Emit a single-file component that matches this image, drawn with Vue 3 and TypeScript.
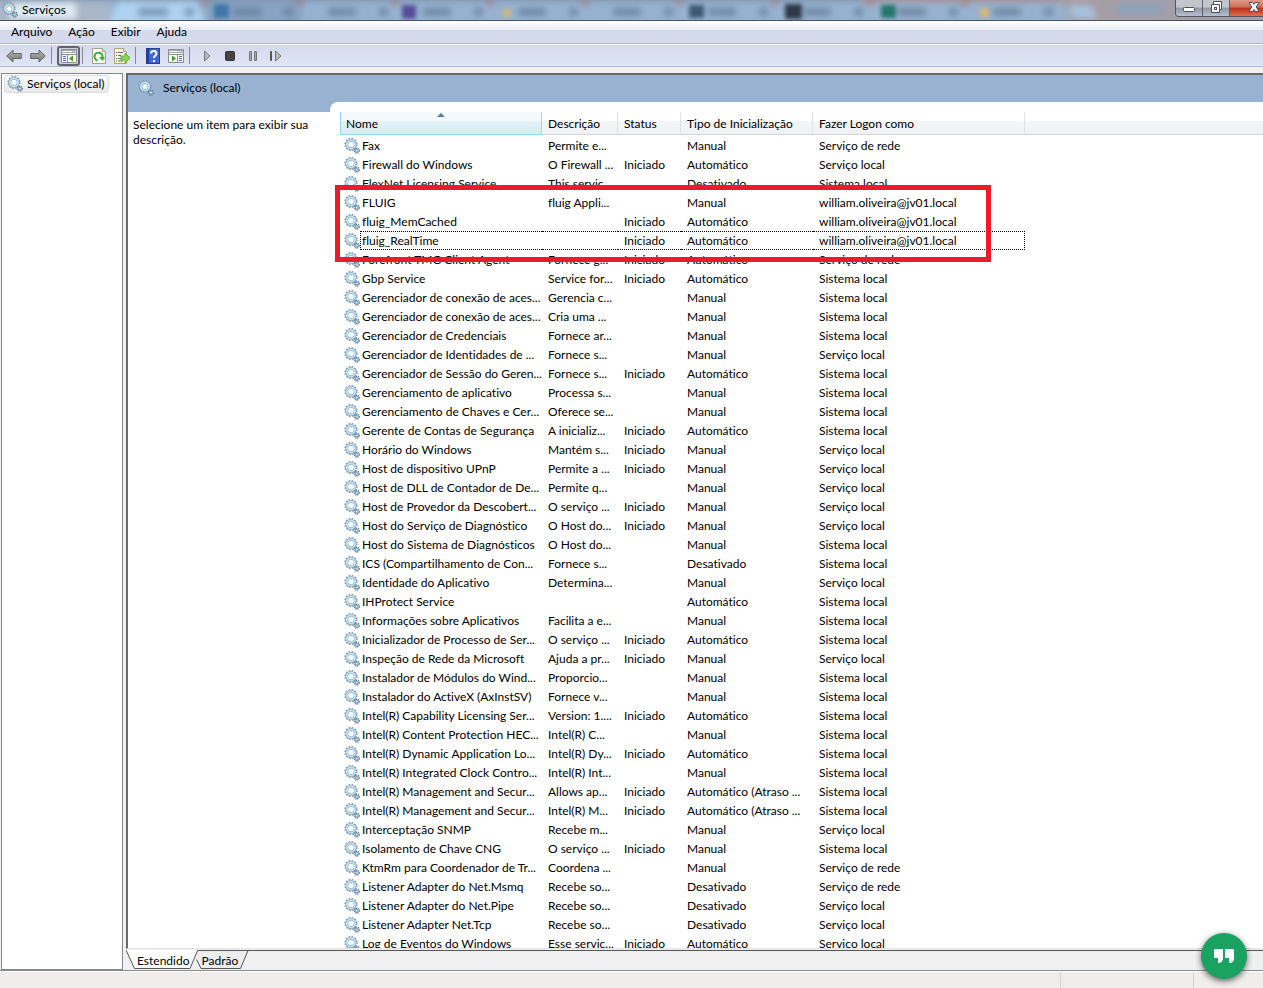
<script setup lang="ts">
interface Service {
  name: string
  description: string
  status: string
  startup: string
  logon: string
  focused?: boolean
}

const startupTypes: Record<string, string> = {
  M: 'Manual',
  A: 'Automático',
  D: 'Desativado',
  T: 'Automático (Atraso ...',
}

const logonAccounts: Record<string, string> = {
  S: 'Sistema local',
  L: 'Serviço local',
  R: 'Serviço de rede',
  W: 'william.oliveira@jv01.local',
}

// name | description | running | startup type | logon account
const source = `Fax|Permite e...||M|R
Firewall do Windows|O Firewall ...|1|A|L
FlexNet Licensing Service|This servic...||D|S
FLUIG|fluig Appli...||M|W
fluig_MemCached||1|A|W
fluig_RealTime||1|A|W
Forefront TMG Client Agent|Fornece g...|1|A|R
Gbp Service|Service for...|1|A|S
Gerenciador de conexão de aces...|Gerencia c...||M|S
Gerenciador de conexão de aces...|Cria uma ...||M|S
Gerenciador de Credenciais|Fornece ar...||M|S
Gerenciador de Identidades de ...|Fornece s...||M|L
Gerenciador de Sessão do Geren...|Fornece s...|1|A|S
Gerenciamento de aplicativo|Processa s...||M|S
Gerenciamento de Chaves e Cer...|Oferece se...||M|S
Gerente de Contas de Segurança|A inicializ...|1|A|S
Horário do Windows|Mantém s...|1|M|L
Host de dispositivo UPnP|Permite a ...|1|M|L
Host de DLL de Contador de De...|Permite q...||M|L
Host de Provedor da Descobert...|O serviço ...|1|M|L
Host do Serviço de Diagnóstico|O Host do...|1|M|L
Host do Sistema de Diagnósticos|O Host do...||M|S
ICS (Compartilhamento de Con...|Fornece s...||D|S
Identidade do Aplicativo|Determina...||M|L
IHProtect Service|||A|S
Informações sobre Aplicativos|Facilita a e...||M|S
Inicializador de Processo de Ser...|O serviço ...|1|A|S
Inspeção de Rede da Microsoft|Ajuda a pr...|1|M|L
Instalador de Módulos do Wind...|Proporcio...||M|S
Instalador do ActiveX (AxInstSV)|Fornece v...||M|S
Intel(R) Capability Licensing Ser...|Version: 1....|1|A|S
Intel(R) Content Protection HEC...|Intel(R) C...||M|S
Intel(R) Dynamic Application Lo...|Intel(R) Dy...|1|A|S
Intel(R) Integrated Clock Contro...|Intel(R) Int...||M|S
Intel(R) Management and Secur...|Allows ap...|1|T|S
Intel(R) Management and Secur...|Intel(R) M...|1|T|S
Interceptação SNMP|Recebe m...||M|L
Isolamento de Chave CNG|O serviço ...|1|M|S
KtmRm para Coordenador de Tr...|Coordena ...||M|R
Listener Adapter do Net.Msmq|Recebe so...||D|R
Listener Adapter do Net.Pipe|Recebe so...||D|L
Listener Adapter Net.Tcp|Recebe so...||D|L
Log de Eventos do Windows|Esse serviç...|1|A|L`

const services: Service[] = source.split('\n').map((line) => {
  const [name, description, running, startup, logon] = line.split('|')
  return {
    name,
    description,
    status: running ? 'Iniciado' : '',
    startup: startupTypes[startup],
    logon: logonAccounts[logon],
    focused: name === 'fluig_RealTime',
  }
})

const menus = ['Arquivo', 'Ação', 'Exibir', 'Ajuda']
const tabEdges = [205, 300, 395, 490, 585, 680, 775, 870, 965]
</script>

<template>
  <div class="window">
    <svg class="defs" width="0" height="0" aria-hidden="true">
      <defs>
        <linearGradient id="arrowFill" x1="0" y1="0" x2="0" y2="1">
          <stop offset="0" stop-color="#b5b5b5" />
          <stop offset="1" stop-color="#777" />
        </linearGradient>
        <symbol id="gear" viewBox="0 0 16 16">
          <circle cx="7" cy="6.500" r="5.700" fill="none" stroke="#8496a5" stroke-width="1.800" stroke-dasharray="1.600 1.380" />
          <circle cx="7" cy="6.500" r="4.100" fill="none" stroke="#7ba2bd" stroke-width="2.800" />
          <circle cx="7" cy="6.500" r="4.100" fill="none" stroke="#c3e3f4" stroke-width="1.800" />
          <circle cx="7" cy="6.500" r="2.500" fill="#fafdff" />
          <circle cx="12.800" cy="12.600" r="2.300" fill="none" stroke="#5d7b92" stroke-width="1.700" stroke-dasharray="1 0.8" />
          <circle cx="12.800" cy="12.600" r="1.500" fill="#dcecf5" stroke="#7ba4bf" stroke-width="1.100" />
        </symbol>
      </defs>
    </svg>

    <header class="titlebar">
      <svg class="glass" width="100%" height="20" aria-hidden="true">
        <defs>
          <filter id="soft" x="-5%" y="-50%" width="110%" height="200%"><feGaussianBlur stdDeviation="3" /></filter>
          <filter id="softer" x="-5%" y="-100%" width="110%" height="300%"><feGaussianBlur stdDeviation="3" /></filter>
        </defs>
        <rect width="100%" height="20" fill="#97b2d0" />
        <g filter="url(#soft)">
          <rect x="-10" y="-4" width="120" height="30" fill="#a9b7c9" />
          <rect x="10" y="3" width="66" height="16" fill="#dfeaf3" />
          <path d="M108 24 L118 2 H196 L206 24 Z" fill="#aed3f2" />
          <rect x="206" y="-6" width="96" height="30" fill="#88a3c3" />
          <rect x="-10" y="-8" width="1080" height="9" fill="#7e93ad" />
          <rect x="860" y="-6" width="420" height="8" fill="#a78f92" />
          <path d="M1058 -6 H1280 V26 H1074 Z" fill="#a69ea6" />
          <path d="M1068 6 H1090 L1098 18 H1074 Z" fill="#a7c3df" />
          <rect x="1116" y="3" width="48" height="12" fill="#8fa3b9" />
        </g>
        <g class="favicons">
          <rect x="214" y="4" width="15" height="14" fill="#3f76a8" />
          <rect x="402" y="5" width="14" height="14" fill="#554d98" />
          <rect x="689" y="5" width="15" height="13" fill="#3d5873" />
          <rect x="785" y="4" width="17" height="15" fill="#2c3a47" />
          <rect x="881" y="5" width="15" height="13" fill="#23756a" />
          <rect x="503" y="9" width="8" height="8" fill="#d0b77a" />
          <rect x="980" y="8" width="9" height="9" fill="#d8b878" />
        </g>
        <g class="tab-marks" filter="url(#softer)">
          <rect x="138" y="8" width="30" height="8" />
          <rect x="185" y="8" width="9" height="8" />
          <g v-for="x in tabEdges" :key="x">
            <rect :x="x + 28" y="8" width="28" height="8" />
            <rect :x="x + 79" y="8" width="9" height="8" />
            <circle :cx="x" cy="2" r="4" class="tab-edge" />
          </g>
        </g>
      </svg>
      <svg class="icon" width="16" height="16" aria-hidden="true"><use href="#gear" /></svg>
      <h1>Serviços</h1>
      <div class="controls">
        <button class="control" aria-label="Minimizar">
          <svg width="14" height="16" viewBox="0 0 14 16"><rect x="1.500" y="7.500" width="11" height="4" rx="1" fill="#fff" stroke="#4b5263" /></svg>
        </button>
        <button class="control" aria-label="Restaurar">
          <svg width="14" height="16" viewBox="0 0 14 16"><path d="M4.500 1.500h8v8h-2v3h-8v-8h2z" fill="#fff" stroke="#4b5263" /><path d="M4 4.500h6.500v5.500" fill="none" stroke="#4b5263" /><rect x="5.500" y="7.500" width="2" height="2" fill="#fff" stroke="#4b5263" /></svg>
        </button>
        <button class="control close" aria-label="Fechar">
          <svg width="14" height="16" viewBox="0 0 14 16"><path d="M2 2.500h3.500l1.500 2 1.500-2H12L9.200 7l2.800 4.500H8.500l-1.500-2-1.500 2H2L4.800 7z" fill="#fff" stroke="#4b5263" /></svg>
        </button>
      </div>
    </header>

    <nav class="menubar">
      <button v-for="menu in menus" :key="menu">{{ menu }}</button>
    </nav>

    <div class="toolbar">
      <button aria-label="Voltar">
        <svg width="16" height="16" viewBox="0 0 16 16"><path d="M.7 8 7 2v3.500h8.300v5H7V14z" fill="url(#arrowFill)" stroke="#666" /></svg>
      </button>
      <button aria-label="Avançar">
        <svg width="16" height="16" viewBox="0 0 16 16"><path d="M15.300 8 9 2v3.500H.7v5H9V14z" fill="url(#arrowFill)" stroke="#666" /></svg>
      </button>
      <i class="separator wide"></i>
      <button class="pressed" aria-label="Mostrar árvore de console">
        <svg width="16" height="16" viewBox="0 0 16 16"><path d="M.5 1.500h15v13H.5z" fill="#fff" stroke="#8c8f96" /><path d="M1 2h14v3H1z" fill="#a8abb2" /><path d="M1 3.500h10M12 3.500h1M14 3.500h1" stroke="#fff" /><path d="M1 6.500h14M6.500 7v7" stroke="#8c8f96" /><path d="M2 8.500h3M2 10.500h3M2 12.500h3" stroke="#4a78ba" /><path d="M12 7.500v6L8 10.500z" fill="#3ba129" /></svg>
      </button>
      <i class="separator"></i>
      <button aria-label="Atualizar">
        <svg width="16" height="16" viewBox="0 0 16 16"><path d="M1.500.5h10l3 3v12h-13z" fill="#fffef5" stroke="#a5a28d" /><path d="M11.500.5v3h3" fill="#ddd" stroke="#a5a28d" /><path d="M6.500 12.500A4 4 0 1 1 11.500 9" fill="none" stroke="#32ad37" stroke-width="2" /><path d="M8 9h6l-2.500 4z" fill="#32ad37" /></svg>
      </button>
      <button aria-label="Exportar lista">
        <svg width="16" height="16" viewBox="0 0 16 16"><path d="M.5.5h9l3 3v12H.5z" fill="#fff8d5" stroke="#b2a477" /><path d="M9.500.5v3h3" fill="#eee" stroke="#b2a477" /><path d="M2 4.500h1M2 7.500h1M2 10.500h1M2 13h1M4 4.500h5M4 7.500h3M4 10.500h3M4 13h5" stroke="#66668b" /><path d="M7 8h4V5l5 5-5 5v-3H7z" fill="#86d954" stroke="#4da62e" stroke-width=".8" /></svg>
      </button>
      <i class="separator wide"></i>
      <button aria-label="Ajuda">
        <svg width="14" height="16" viewBox="0 0 14 16"><rect x=".5" y=".5" width="13" height="15" fill="#3e68d5" stroke="#263d91" /><path d="M1 1h2v14H1z" fill="#233f9b" /><path d="M5 5.500C5 2 10.500 2 10.500 5.500 10.500 7.500 8 7.500 8 10" fill="none" stroke="#fff" stroke-width="2" /><path d="M7 12h2v2H7z" fill="#fff" /></svg>
      </button>
      <button aria-label="Mostrar painel de ações">
        <svg width="16" height="16" viewBox="0 0 16 16"><path d="M.5 1.500h15v13H.5z" fill="#fff" stroke="#8c8f96" /><path d="M1 2h14v3H1z" fill="#a8abb2" /><path d="M1 3.500h10M12 3.500h1M14 3.500h1" stroke="#fff" /><path d="M1 6.500h14M9.500 7v7" stroke="#8c8f96" /><path d="M11 8.500h3M11 10.500h3M11 12.500h3" stroke="#4a78ba" /><path d="M4 7.500v6l4-3z" fill="#3ba129" /></svg>
      </button>
      <i class="separator wide"></i>
      <button aria-label="Iniciar serviço">
        <svg width="16" height="16" viewBox="0 0 16 16"><path d="M5.500 3v10L11 8z" fill="#bbb" stroke="#777" /></svg>
      </button>
      <button aria-label="Parar serviço">
        <svg width="16" height="16" viewBox="0 0 16 16"><rect x="3.500" y="3.500" width="9" height="9" rx="1" fill="#444" stroke="#333" /></svg>
      </button>
      <button aria-label="Pausar serviço">
        <svg width="16" height="16" viewBox="0 0 16 16"><path d="M4.500 3.500h2v9h-2zM9.500 3.500h2v9h-2z" fill="#aaa" stroke="#777" /></svg>
      </button>
      <button aria-label="Reiniciar serviço">
        <svg width="16" height="16" viewBox="0 0 16 16"><path d="M2.500 3.500h1v9h-1z" fill="#777" stroke="#555" /><path d="M7.500 3v10L13 8z" fill="#bbb" stroke="#777" /></svg>
      </button>
    </div>

    <main class="workspace">
      <aside class="tree">
        <button class="tree-node">
          <svg width="16" height="16" aria-hidden="true"><use href="#gear" /></svg>
          Serviços (local)
        </button>
      </aside>

      <section class="content">
        <div class="pane">
          <div class="banner">
            <svg width="16" height="16" aria-hidden="true"><use href="#gear" /></svg>
            <h2>Serviços (local)</h2>
          </div>
          <p class="hint">Selecione um item para exibir sua descrição.</p>
          <div class="list">
            <table>
              <colgroup>
                <col class="col-name" />
                <col class="col-description" />
                <col class="col-status" />
                <col class="col-startup" />
                <col class="col-logon" />
                <col />
              </colgroup>
              <thead>
                <tr>
                  <th class="sorted" aria-sort="ascending">Nome</th>
                  <th>Descrição</th>
                  <th>Status</th>
                  <th>Tipo de Inicialização</th>
                  <th>Fazer Logon como</th>
                  <td></td>
                </tr>
              </thead>
              <tbody>
                <tr v-for="(service, i) in services" :key="i" :class="{ focused: service.focused }">
                  <td class="name">
                    <svg width="16" height="16" aria-hidden="true"><use href="#gear" /></svg>
                    <span>{{ service.name }}</span>
                  </td>
                  <td>{{ service.description }}</td>
                  <td>{{ service.status }}</td>
                  <td>{{ service.startup }}</td>
                  <td>{{ service.logon }}</td>
                  <td class="rest"></td>
                </tr>
              </tbody>
            </table>
            <div class="highlight"></div>
          </div>
        </div>
        <div class="tabs">
          <svg class="tab-outline" width="124" height="20" viewBox="0 0 124 20" aria-hidden="true">
            <path d="M0 0h71.500L64 18.500H8.500z" fill="#fff" />
            <path d="M71.500.5H122l-7.500 18H75l-4.500-9z" fill="#ededed" />
            <path d="M0 0l8.500 18.500H64L71.500.5H122l-7.500 18H75l-4.500-9" fill="none" stroke="#555" />
          </svg>
          <button>Estendido</button>
          <button>Padrão</button>
        </div>
      </section>
    </main>

    <footer class="statusbar"><span></span><span></span><span></span></footer>

    <button class="quote" aria-label="Citação">
      <svg width="20" height="14" viewBox="0 0 20 14"><path d="M0 0h9v9q0 5-5 5V9H0zM11 0h9v9q0 5-5 5V9h-4z" fill="#fff" /></svg>
    </button>
  </div>
</template>

<style>
body {
  margin: 0;
}
</style>

<style scoped>
* {
  box-sizing: border-box;
}

.window {
  position: relative;
  display: flex;
  flex-direction: column;
  height: 100vh;
  overflow: hidden;
  background: #f0f0f0;
  color: #000;
  font: 12px/15px Lato, "Noto Sans", sans-serif;
  font-variant-ligatures: none;
}

button {
  padding: 0;
  border: 0;
  background: none;
  color: inherit;
  font: inherit;
  font-variant-ligatures: none;
}

svg {
  display: block;
  flex: none;
}

.defs {
  position: absolute;
}

h1,
h2,
p {
  margin: 0;
  font: inherit;
  font-variant-ligatures: none;
}

.titlebar {
  position: relative;
  display: flex;
  flex: none;
  gap: 4px;
  height: 21px;
  padding: 2px 0 0 2px;
  border-bottom: 1px solid #46505f;
  overflow: hidden;
}

.glass {
  position: absolute;
  inset: 0;
}

.favicons {
  filter: blur(2px);
}

.tab-marks {
  fill: #58708f;
  opacity: 0.6;
}

.tab-edge {
  fill: #a9716f;
}

.icon,
h1,
.controls {
  position: relative;
}

.controls {
  display: flex;
  height: 17px;
  margin: -2px 0 0 auto;
  border: 1px solid #505866;
  border-width: 0 0 1px 1px;
  border-radius: 0 0 0 4px;
  overflow: hidden;
}

.control {
  display: grid;
  place-items: center;
  width: 27px;
  border-right: 1px solid #59606e;
  background: linear-gradient(#c3c5cb 0 45%, #8f96a3 50%, #b5c0d0);
}

.close {
  width: 33px;
  padding-left: 14px;
  border: 0;
  background: linear-gradient(#dd9b8b 0, #cd6d59 45%, #b92f17 50%, #df6e4d);
}

.menubar {
  display: flex;
  flex: none;
  gap: 16px;
  height: 23px;
  padding: 0 11px 2px;
  border-bottom: 1px solid #b1b5c4;
  background: linear-gradient(#fff, #e9ecf7 9px, #d4d9ec 9px);
}

.toolbar {
  display: flex;
  flex: none;
  align-items: center;
  height: 23px;
  padding-left: 6px;
  border-top: 1px solid #fff;
  border-bottom: 1px solid #b4b8d0;
  background: linear-gradient(#d3d8ec, #e1e6f6);
}

.toolbar button {
  display: grid;
  flex: none;
  place-items: center;
  width: 23px;
  height: 20px;
}

.toolbar button:first-child {
  width: 16px;
  margin-right: 4px;
}

.toolbar .pressed {
  border: 2px solid #62656f;
  border-radius: 3px;
  background: #ccd0df;
}

.separator {
  flex: none;
  width: 1px;
  height: 17px;
  margin: 0 4px 0 2px;
  background: #858a98;
}

.separator.wide {
  margin-right: 5px;
}

.workspace {
  display: flex;
  flex: 1;
  gap: 3px;
  min-height: 0;
  padding: 6px 0 0 1px;
  border-bottom: 1px solid #8a8a8a;
}

.tree {
  flex: none;
  width: 122px;
  padding: 1px 2px;
  border: 1px solid #828790;
  background: #fff;
}

.tree-node {
  display: flex;
  align-items: center;
  gap: 4px;
  height: 18px;
  padding: 0 3px 1px 2px;
  border: 1px solid #dcdcdc;
  border-radius: 3px;
  background: linear-gradient(#fafafa, #e9e9e9);
  white-space: nowrap;
}

.content {
  display: flex;
  flex: 1;
  flex-direction: column;
  min-width: 0;
}

.pane {
  display: grid;
  flex: 1;
  grid-template: 27px 10px 1fr / 202px 1fr;
  min-height: 0;
  border: 2px solid #696969;
  border-right: 0;
  border-bottom: 1px solid #e3e3e3;
  background: #fff;
}

.banner {
  display: flex;
  grid-area: 1 / 1 / 3 / 3;
  gap: 9px;
  padding: 5px 10px;
  background: #99b2d1;
}

.hint {
  grid-area: 3 / 1;
  padding: 5px;
}

.list {
  position: relative;
  grid-area: 2 / 2 / 4 / 3;
  padding: 10px 0 0 10px;
  border-top-left-radius: 8px;
  background: #fff;
  overflow: hidden;
}

table {
  width: 100%;
  border-collapse: separate;
  border-spacing: 0;
  table-layout: fixed;
}

.col-name {
  width: 202px;
}

.col-description {
  width: 76px;
}

.col-status {
  width: 63px;
}

.col-startup {
  width: 132px;
}

.col-logon {
  width: 212px;
}

th,
thead td {
  height: 23px;
  padding: 1px 6px 0;
  border-right: 1px solid #dfe1e4;
  border-bottom: 1px solid #d5d5d5;
  background: linear-gradient(#fff 9px, #f4f5f7 9px, #eff1f3);
  font-weight: 400;
  text-align: left;
  white-space: nowrap;
}

thead td {
  border-right: 0;
}

th.sorted {
  position: relative;
  padding-left: 5px;
  border: 1px solid #96d9f9;
  border-top: 0;
  background: linear-gradient(#f3f9fd 9px, #e5f2f9 9px, #d8ebf5);
}

th.sorted::after {
  position: absolute;
  top: 1px;
  left: 50%;
  margin-left: -4px;
  border: 4px solid transparent;
  border-top: 0;
  border-bottom-color: #51819b;
  content: "";
}

tbody td {
  height: 19px;
  padding: 0 0 0 6px;
  white-space: nowrap;
}

tbody tr:first-child td {
  height: 20px;
  padding-top: 1px;
}

tbody .name {
  display: flex;
  align-items: center;
  padding-left: 4px;
}

.name span {
  flex: 1;
  padding: 1px 0 1px 2px;
}

.focused td:not(.rest, .name),
.focused .name span {
  border: 1px dotted #000;
  border-width: 1px 0;
}

.focused .name span {
  height: 19px;
  border-left-width: 1px;
  padding-left: 1px;
}

.focused td:nth-child(5) {
  border-right-width: 1px;
}

.highlight {
  position: absolute;
  top: 83px;
  left: 5px;
  width: 656px;
  height: 77px;
  border: 5px solid #ed1c24;
}

.tabs {
  position: relative;
  display: flex;
  flex: none;
  gap: 12px;
  height: 20px;
  margin-top: 1px;
  padding-left: 11px;
  background: linear-gradient(#555, #555) 72px 0 / 100% 1px no-repeat;
}

.tab-outline {
  position: absolute;
  top: 0;
  left: 0;
}

.tabs button {
  position: relative;
}

.statusbar {
  display: grid;
  flex: none;
  grid-template-columns: 1fr 133px 70px;
  height: 17px;
  border-top: 1px solid #fff;
  background: #f1edec;
}

.statusbar span + span {
  border-left: 1px solid #d7d3d3;
}

.quote {
  position: absolute;
  right: 16px;
  bottom: 9px;
  display: grid;
  place-items: center;
  width: 46px;
  height: 46px;
  border-radius: 50%;
  background: #1aa260;
  box-shadow: 0 2px 6px rgb(0 0 0 / 60%);
}
</style>
